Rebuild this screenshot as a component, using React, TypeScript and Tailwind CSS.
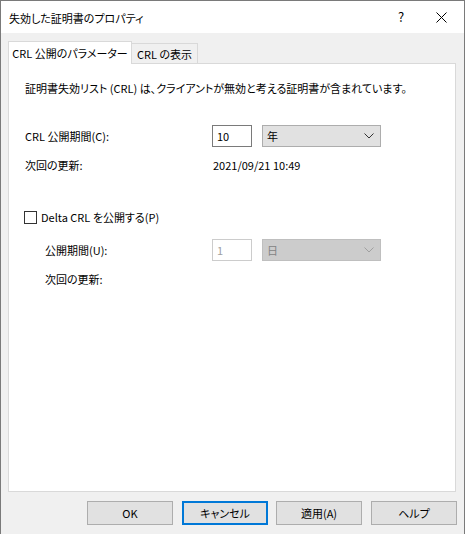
import React from "react";

const font = "font-['Noto_Sans_CJK_JP','Noto_Sans',sans-serif] [font-feature-settings:'palt']";

function Chevron({ color }: { color: string }) {
  return (
    <svg width="10" height="6" viewBox="0 0 10 6" className="shrink-0">
      <path d="M0.5 0.5 L5 5 L9.5 0.5" fill="none" stroke={color} strokeWidth="1" />
    </svg>
  );
}

export default function App() {
  return (
    <div className={`${font} text-[11px] leading-[16px] text-black bg-white w-[467px] h-[534px] whitespace-nowrap`}>
      <div className="w-[465px] h-[534px] border-x border-t border-[#7a7a7a] flex flex-col bg-[#f0f0f0]">
        {/* title bar */}
        <div className="h-[32px] bg-white flex items-center pl-[8px] shrink-0">
          <span className="flex-1 pt-[1px] text-[11px]">失効した証明書のプロパティ</span>
          <span className="w-[20px] text-center text-[13px] mr-[25px]">?</span>
          <svg width="11" height="11" viewBox="0 0 11 11" className="mr-[17px]">
            <path d="M0.5 0.5 L10.5 10.5 M10.5 0.5 L0.5 10.5" stroke="#000" strokeWidth="1" />
          </svg>
        </div>
        {/* body */}
        <div className="flex flex-col pt-[8px] pl-[7px] pr-[8px]">
          {/* tabs */}
          <div className="flex items-end h-[22px]">
            <div className="relative z-10 w-[124px] h-[23px] -mb-[1px] bg-white border-x border-t border-[#d9d9d9] flex items-center justify-center pb-[1px]">
              CRL 公開のパラメーター
            </div>
            <div className="w-[66px] h-[20px] bg-[#f0f0f0] border-r border-t border-[#d9d9d9] flex items-center justify-center">
              CRL の表示
            </div>
          </div>
          {/* panel */}
          <div className="h-[429px] bg-white border border-[#d9d9d9] flex flex-col pl-[16px] pt-[16px]">
            <div className="h-[16px]">証明書失効リスト (CRL) は、クライアントが無効と考える証明書が含まれています。</div>

            <div className="flex items-center h-[22px] mt-[29px]">
              <div className="w-[187px]">CRL 公開期間(C):</div>
              <div className="w-[40px] h-[22px] border border-[#7a7a7a] flex items-center pl-[4px]">10</div>
              <div className="w-[119px] h-[22px] ml-[10px] bg-[#e1e1e1] border border-[#adadad] flex items-center pl-[4px] pr-[6px]">
                <span className="flex-1">年</span>
                <Chevron color="#333" />
              </div>
            </div>

            <div className="flex items-center h-[16px] mt-[10px]">
              <div className="w-[188px]">次回の更新:</div>
              <div>2021/09/21 10:49</div>
            </div>

            <div className="flex items-center h-[16px] mt-[36px] -ml-[1px]">
              <div className="w-[13px] h-[13px] border border-[#333] bg-white" />
              <span className="ml-[4px]">Delta CRL を公開する(P)</span>
            </div>

            <div className="flex items-center h-[22px] mt-[14px] pl-[20px]">
              <div className="w-[167px]">公開期間(U):</div>
              <div className="w-[40px] h-[22px] border border-[#cccccc] flex items-center pl-[4px] text-[#a0a0a0]">1</div>
              <div className="w-[119px] h-[22px] ml-[10px] bg-[#cccccc] border border-[#bfbfbf] flex items-center pl-[4px] pr-[6px] text-[#838383]">
                <span className="flex-1">日</span>
                <Chevron color="#a0a0a0" />
              </div>
            </div>

            <div className="flex items-center h-[16px] mt-[10px] pl-[20px]">
              <div>次回の更新:</div>
            </div>
          </div>
          {/* buttons */}
          <div className="flex justify-end mt-[9px] -mr-[1px]">
            <div className="w-[86px] h-[24px] bg-[#e1e1e1] border border-[#adadad] flex items-center justify-center">OK</div>
            <div className="w-[86px] h-[24px] ml-[9px] bg-[#e1e1e1] border-2 border-[#0078d7] flex items-center justify-center">キャンセル</div>
            <div className="w-[86px] h-[24px] ml-[8px] bg-[#e1e1e1] border border-[#adadad] flex items-center justify-center">適用(A)</div>
            <div className="w-[86px] h-[24px] ml-[9px] bg-[#e1e1e1] border border-[#adadad] flex items-center justify-center">ヘルプ</div>
          </div>
        </div>
      </div>
    </div>
  );
}
